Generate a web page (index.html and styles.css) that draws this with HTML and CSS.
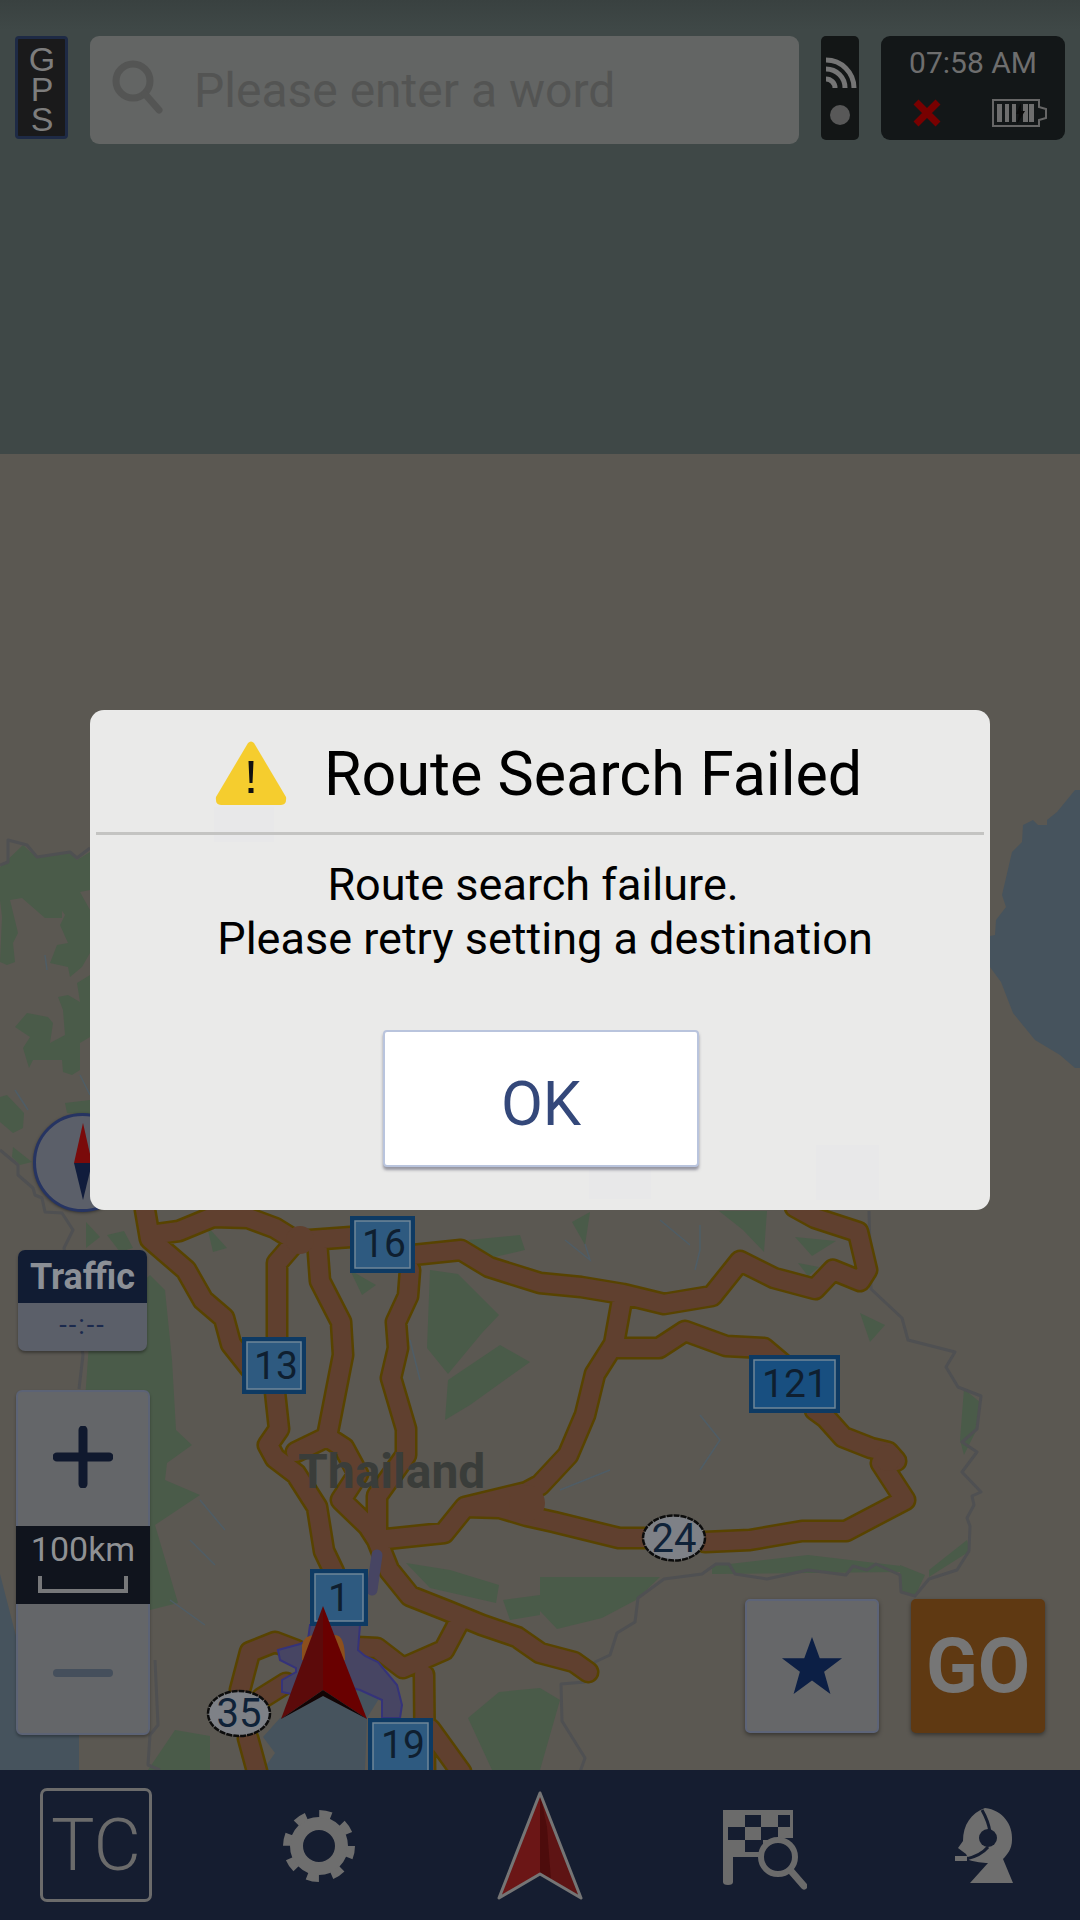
FILE: index.html
```html
<!DOCTYPE html>
<html lang="en">
<head>
<meta charset="utf-8">
<title>Route Search Failed</title>
<link rel="stylesheet" href="styles.css">
</head>
<body>
<div class="screen">
  <header class="topbar">
    <div class="gps"><span class="gps-text">GPS</span></div>
    <div class="search">
      <svg class="search-icon" viewBox="0 0 52 56"><circle cx="21" cy="21" r="17"/><path d="M33 34 47 50"/></svg>
      <span class="placeholder">Please enter a word</span>
    </div>
    <div class="signal">
      <svg class="signal-icon" viewBox="0 0 38 104">
        <g class="arcs"><path d="M5 43a9 9 0 0 1 9 9"/><path d="M5 33a19 19 0 0 1 19 19"/><path d="M5 24a28 28 0 0 1 28 28"/></g>
        <circle class="signal-dot" cx="19" cy="79" r="10"/>
      </svg>
    </div>
    <div class="status">
      <div class="clock">07:58 AM</div>
      <div class="status-row">
        <svg class="cross" viewBox="0 0 28 28"><path d="M3 3 25 25M25 3 3 25"/></svg>
        <svg class="battery" viewBox="0 0 56 28">
          <path class="batt-outline" d="M1 1H47V8L54 10V19L47 21V27H1Z"/>
          <path class="batt-bars" d="M5 5H10V23H5ZM13 5H17V23H13ZM20 5H24V23H20ZM31 5H36V23H31ZM37 5H42V23H37Z"/>
          <path class="batt-bolt" d="M29 4 24 15H27L25 25 33 12H29Z"/>
        </svg>
      </div>
    </div>
  </header>

  <main class="map">
    <svg class="map-canvas" viewBox="0 454 1080 1316">
      <defs>
        <path id="roads" d="M145 1210 150 1239 186 1270 203 1300 224 1318 231 1344 250 1368
          M150 1235 179 1231 213 1217 248 1218 275 1228 296 1241 351 1237
          M413 1255 461 1250 489 1267 540 1283 581 1287 623 1294 664 1304 712 1296 740 1261 774 1278 815 1289 833 1270 860 1281 867 1270 858 1232 815 1218 795 1207
          M296 1241 277 1263 277 1340
          M275 1392 279 1429 268 1445 275 1458 296 1474 317 1507 324 1551 334 1572
          M317 1240 320 1281 341 1322 343 1355 327 1437 296 1452
          M327 1437 344 1448 358 1474 341 1500 368 1526 377 1540
          M410 1270 408 1296 396 1322 398 1348 391 1378 406 1429 406 1455 377 1496 377 1540
          M377 1540 444 1533 465 1507 527 1492 540 1485 568 1455 585 1415 595 1374 614 1344 623 1294
          M617 1348 659 1348 685 1331 726 1346 764 1348 790 1370
          M815 1410 826 1418 843 1437 871 1448 888 1452 896 1461 881 1463 905 1500 846 1531 802 1531 750 1540 705 1542
          M645 1538 619 1538 554 1522 527 1516 500 1508 465 1507
          M377 1540 389 1570 410 1596 448 1611 482 1625 517 1637 540 1653 574 1662 588 1672
          M460 1620 444 1650 403 1668 377 1648 357 1647
          M424 1675 425 1775
          M240 1690 250 1652 275 1642 296 1650
          M262 1698 286 1683
          M248 1738 258 1775
          M430 1729 461 1772"/>
      </defs>

      <g class="sea">
        <path d="M1080 790 1075 790 1057 812 1047 820 1047 825 1038 825 1033 820 1023 825 1022 842 1012 852 1002 895 1006 907 996 920 995 935 985 937 985 965 990 967 1001 982 1013 1013 1035 1040 1060 1055 1075 1068 1080 1068Z"/>
        <path d="M0 1574 41 1733 79 1733 79 1770H0Z"/>
        <path d="M280 1718 322 1693 357 1690 380 1697 367 1718 365 1770 263 1770 275 1753 263 1737Z"/>
      </g>

      <g class="forest">
        <path d="M0 867 23 845 37 858 70 853 77 860 90 852 90 890 80 892 90 910 90 953 82 967 70 977 68 967 50 963 57 945 68 943 60 925 65 915 53 898 62 893 62 918 45 918 22 898 10 900 18 933 13 943 15 962 7 965 0 962 2 917 0 900Z"/>
        <path d="M58 997 68 995 80 1002 77 983 90 975 90 1037 80 1043 80 1070 72 1075 63 1072 62 1060 33 1060 29 1068 23 1048 30 1037 15 1027 27 1013 48 1017 53 1023 50 1043 65 1035 63 1010Z"/>
        <path d="M0 1097 7 1095 24 1113 23 1128 13 1133 0 1122Z"/>
        <path d="M65 1103 90 1100 90 1115 67 1113Z"/>
        <path d="M13 1147 32 1162 20 1165 12 1157Z"/>
        <path d="M86 1222 100 1237 86 1248Z"/>
        <path d="M107 1235 124 1231 133 1248 120 1252Z"/>
        <path d="M150 1275 165 1290 172 1360 176 1430 192 1445 167 1463 165 1480 200 1495 155 1525 178 1603 150 1610 100 1500 85 1400 90 1330Z"/>
        <path d="M207 1226 227 1248 213 1252Z"/>
        <path d="M350 1270 376 1285 362 1295Z"/>
        <path d="M430 1270 458 1274 499 1315 482 1333 448 1374 427 1348Z"/>
        <path d="M448 1380 500 1345 530 1362 470 1405 445 1420Z"/>
        <path d="M468 1240 520 1235 525 1250 490 1258Z"/>
        <path d="M406 1563 450 1570 499 1585 496 1603 430 1588Z"/>
        <path d="M503 1600 540 1595 540 1615 510 1620Z"/>
        <path d="M540 1577 609 1577 660 1577 636 1600 602 1618 557 1629 540 1611Z"/>
        <path d="M468 1718 499 1692 540 1688 560 1700 540 1770H492Z"/>
        <path d="M148 1770 175 1730 210 1736 210 1770Z"/>
        <path d="M719 1211 767 1211 764 1252 743 1230Z"/>
        <path d="M572 1222 590 1212 585 1245Z"/>
        <path d="M795 1237 836 1241 812 1256Z"/>
        <path d="M798 1263 819 1267 808 1276Z"/>
        <path d="M712 1566 808 1555 901 1566 900 1572 712 1574Z"/>
        <path d="M900 1565 925 1575 915 1596 900 1592Z"/>
        <path d="M929 1570 967 1540 970 1551 929 1577Z"/>
        <path d="M964 1389 981 1403 977 1429 964 1455 960 1440Z"/>
        <path d="M860 1313 885 1325 870 1342Z"/>
      </g>

      <g class="rivers">
        <path d="M585 1244 590 1260 565 1240M700 1225 700 1250 695 1270M660 1220 690 1245M700 1415 720 1440 700 1470M610 1470 560 1490M200 1500 225 1530M190 1540 215 1565M170 1600 205 1625M410 1340 420 1380M350 1510 385 1510M45 955 47 970M80 1075 90 1095M15 1090 28 1110"/>
      </g>

      <g class="border">
        <path d="M0 865 8 862 8 840 27 845 37 857 70 852 77 858 90 848"/>
        <path d="M0 1150 18 1165 18 1175 33 1188 35 1195 42 1198 45 1212 62 1213 73 1230 64 1248 83 1355 79 1389"/>
        <path d="M155 1660 158 1725 150 1735 148 1765 160 1770"/>
        <path d="M869 1211 871 1289 902 1318 908 1340 955 1352 946 1367 958 1387 981 1396 977 1429 962 1442 977 1452 962 1472 981 1492 972 1496 974 1505 967 1518 970 1526 969 1551 957 1570 929 1579 915 1596 901 1592 900 1575 876 1564 867 1570 853 1566 846 1575 808 1570 767 1579 735 1574 729 1564 716 1564 702 1574 664 1579 638 1598 635 1622 617 1633 610 1655 595 1662 585 1682 561 1684 562 1721 585 1758 580 1772"/>
      </g>

      <use class="road-edge" href="#roads"/>
      <use class="road-fill" href="#roads"/>
      <circle class="road-knot" cx="527" cy="1503" r="18"/>
      <circle class="road-knot" cx="300" cy="1240" r="14"/>
      <circle class="road-knot" cx="888" cy="1458" r="13"/>

      <g class="route">
        <path class="route-thin" d="M377 1555 372 1590"/>
        <path class="route-body" d="M310 1625H360L358 1650 365 1656 378 1662 397 1685 402 1705 400 1718H382V1700L360 1690 320 1680 296 1695 282 1692 282 1680 296 1672V1668L280 1660 278 1650 300 1644 308 1640Z"/>
      </g>
      <path class="halo" d="M302 1660V1645Q304 1635 315 1635H335Q345 1635 345 1660Z"/>

      <text class="map-label" x="298" y="1488">Thailand</text>

      <g class="sign"><rect x="350" y="1216" width="65" height="57"/><rect class="sign-inner" x="355" y="1221" width="55" height="47"/><text x="384" y="1257">16</text></g>
      <g class="sign"><rect x="242" y="1337" width="64" height="57"/><rect class="sign-inner" x="247" y="1342" width="54" height="47"/><text x="276" y="1379">13</text></g>
      <g class="sign"><rect x="310" y="1569" width="58" height="57"/><rect class="sign-inner" x="315" y="1574" width="48" height="47"/><text x="339" y="1611">1</text></g>
      <g class="sign"><rect x="368" y="1718" width="65" height="70"/><rect class="sign-inner" x="373" y="1723" width="55" height="60"/><text x="403" y="1758">19</text></g>
      <g class="sign sign-wide"><rect x="749" y="1355" width="91" height="58"/><rect class="sign-inner" x="754" y="1360" width="81" height="48"/><text x="795" y="1397">121</text></g>

      <g class="shield"><ellipse cx="239" cy="1713.500" rx="31" ry="22.500"/><text x="239" y="1727">35</text></g>
      <g class="shield"><ellipse cx="674" cy="1538" rx="31" ry="22.500"/><text x="674" y="1552">24</text></g>

      <g class="car">
        <path class="car-left" d="M323 1606 281 1719 323 1690Z"/>
        <path class="car-right" d="M323 1606 367 1719 323 1690Z"/>
        <path class="car-shade" d="M281 1719 323 1690 367 1719 323 1696Z"/>
      </g>
    </svg>

    <div class="compass">
      <svg viewBox="0 0 93 93"><path class="needle-n" d="M47 7 56 47H38Z"/><path class="needle-s" d="M47 84 56 47H38Z"/></svg>
    </div>

    <div class="traffic">
      <div class="traffic-head">Traffic</div>
      <div class="traffic-time">--:--</div>
    </div>

    <div class="zoom">
      <div class="zoom-btn zoom-btn-high"><svg viewBox="0 0 60 62"><path class="zoom-in" d="M4 31H56M30 4V58"/></svg></div>
      <div class="scale">
        <span>100km</span>
        <svg viewBox="0 0 90 18"><path d="M2 0V15H88V0"/></svg>
      </div>
      <div class="zoom-btn zoom-btn-low"><svg viewBox="0 0 60 62"><path class="zoom-out" d="M4 31H56"/></svg></div>
    </div>

    <div class="actions">
      <div class="fav"><svg viewBox="0 0 64 60"><path d="M32 0 40 22H63L44.500 36 51 59 32 45 13 59 19.500 36 1 22H24Z"/></svg></div>
      <div class="go">GO</div>
    </div>
  </main>

  <nav class="tabbar">
    <div class="tab-tc">TC</div>
    <svg class="tab-gear" viewBox="0 0 74 72">
      <circle class="gear-ring" cx="37" cy="36" r="22.500"/>
      <circle class="gear-teeth" cx="37" cy="36" r="32"/>
    </svg>
    <svg class="tab-nav" viewBox="0 0 86 110">
      <path class="nav-left" d="M43 2 2 107 43 83Z"/>
      <path class="nav-right" d="M43 2 84 107 43 83Z"/>
      <path class="nav-mid" d="M43 2 50 36 54 89 43 83Z"/>
      <path class="nav-line" d="M43 2 84 107 43 83 2 107Z"/>
    </svg>
    <svg class="tab-flag" viewBox="0 0 84 80">
      <path class="flag-shape" d="M0 0H70V28H50V47H10V72Q10 75 5 75 0 75 0 72Z"/>
      <path class="flag-check" d="M22 5H38V17H22ZM55 5H67V17H55ZM5 17H22V30H5ZM38 17H55V30H38ZM22 30H40V42H22Z"/>
      <circle class="flag-lens" cx="55" cy="47" r="17"/>
      <path class="flag-handle" d="M68 61 81 76"/>
    </svg>
    <svg class="tab-agent" viewBox="0 0 58 80">
      <path class="agent-head" d="M30 1C48 3 58 18 57 33C57 42 52 48 48 52L58 76H15L33 56C28 56 20 55 14 53L11 47 3 41 8 34C8 18 16 6 30 1Z"/>
      <path class="agent-band" d="M27 3C31 10 34 18 35 25M33 40C28 46 20 50 11 52"/>
      <circle class="agent-ear" cx="33" cy="31" r="9"/>
      <path class="agent-tip" d="M0 49H12V54H0Z"/>
    </svg>
  </nav>

  <section class="dialog" role="alertdialog">
    <span class="ghost ghost-a"></span>
    <span class="ghost ghost-b"></span>
    <span class="ghost ghost-c"></span>
    <div class="dialog-head">
      <svg class="warn" viewBox="0 0 72 64">
        <path class="warn-tri" d="M33 2Q36 -1 39 2L71 56Q72 64 66 64H6Q0 64 1 56Z"/>
        <path class="warn-mark" d="M33.500 20H38.500L37.500 42H34.500ZM33.500 47H38.500V52H33.500Z"/>
      </svg>
      <h1>Route Search Failed</h1>
    </div>
    <p class="dialog-body"><span class="line-a">Route search failure.</span><span>Please retry setting a destination</span></p>
    <button class="ok">OK</button>
  </section>
</div>
</body>
</html>
```

FILE: styles.css
```css
* { box-sizing: border-box; }
html, body { margin: 0; padding: 0; }
body { font-family: Roboto, "Liberation Sans", sans-serif; background: #000; }

.screen {
  position: relative;
  width: 1080px;
  height: 1920px;
  display: flex;
  flex-direction: column;
  overflow: hidden;
}

/* top bar */
.topbar {
  height: 454px;
  flex: none;
  display: flex;
  align-items: flex-start;
  gap: 22px;
  padding: 36px 15px 0;
  background: linear-gradient(#394140 0, #3f4847 30px);
}
.gps {
  width: 53px;
  height: 103px;
  display: flex;
  justify-content: center;
  padding-top: 1px;
  background: #1a1a1b;
  border: 3px solid #1e2a45;
  border-radius: 4px;
  color: #7d7d7d;
}
.gps-text {
  writing-mode: vertical-rl;
  text-orientation: upright;
  font: 34px/47px "Liberation Sans", sans-serif;
  letter-spacing: -8px;
}
.search {
  width: 709px;
  height: 108px;
  display: flex;
  align-items: center;
  padding: 0 0 0 22px;
  background: #636564;
  border-radius: 9px;
}
.search-icon { width: 52px; height: 56px; flex: none; margin-top: -4px; }
.search-icon circle, .search-icon path { fill: none; stroke: #545554; stroke-width: 7; stroke-linecap: round; }
.placeholder { margin-left: 30px; font-size: 48px; color: #535453; }
.signal {
  width: 38px;
  height: 104px;
  background: #131616;
  border-radius: 5px;
}
.signal-icon { display: block; width: 38px; height: 104px; }
.arcs path { fill: none; stroke: #757575; stroke-width: 5; }
.signal-dot { fill: #585858; }
.status {
  width: 184px;
  height: 104px;
  padding-top: 10px;
  background: #131718;
  border-radius: 9px;
}
.clock { text-align: center; font-size: 30px; line-height: 34px; color: #6e6e6e; }
.status-row {
  display: flex;
  align-items: center;
  justify-content: space-between;
  padding: 19px 17px 0 32px;
}
.cross { width: 28px; height: 28px; }
.cross path { fill: none; stroke: #780000; stroke-width: 7; }
.battery { width: 56px; height: 28px; }
.batt-outline { fill: none; stroke: #666; stroke-width: 2; }
.batt-bars { fill: #6e6e6e; }
.batt-bolt { fill: #0b0b0b; }

/* map */
.map {
  position: relative;
  flex: 1;
  background: #5b5852;
}
.map-canvas { display: block; width: 1080px; height: 1316px; }
.sea path { fill: #46535d; }
.forest path { fill: #4a5b49; }
.rivers path { fill: none; stroke: #4f5d66; stroke-width: 1.500; }
.border path { fill: none; stroke: #4f5052; stroke-width: 3; stroke-linejoin: round; }
.road-edge, .road-fill { fill: none; stroke-linejoin: round; stroke-linecap: round; }
.road-edge { stroke: #584300; stroke-width: 23px; }
.road-fill { stroke: #60402f; stroke-width: 18px; }
.road-knot { fill: #60402f; }
.route-body { fill: #474563; stroke: #35337a; stroke-width: 2; }
.route-thin { fill: none; stroke: #474563; stroke-width: 11; stroke-linecap: round; }
.halo { fill: #8c4f1c; }
.map-label { font: 700 48px Roboto, sans-serif; fill: #3a3d3a; }
.sign rect { fill: #0e3a63; }
.sign .sign-inner { fill: #2e5a80; stroke: #6f8698; stroke-width: 1.500; }
.sign text { font: 39px Roboto, sans-serif; fill: #0f1f30; text-anchor: middle; }
.sign-wide .sign-inner { fill: #184f80; }
.shield ellipse { fill: #7e8187; stroke: #0c0c0c; stroke-width: 2.500; stroke-dasharray: 6 1; }
.shield text { font: 40px Roboto, sans-serif; fill: #0f2238; text-anchor: middle; }
.car-left { fill: #5c0a0a; }
.car-right { fill: #690000; }
.car-shade { fill: #120404; }

.compass {
  position: absolute;
  left: 33px;
  top: 659px;
  width: 99px;
  height: 99px;
  border-radius: 50%;
  background: #5b5f69;
  border: 3px solid #263462;
  box-shadow: 0 1px 3px rgba(0, 0, 0, .4);
}
.compass svg { display: block; width: 93px; height: 93px; }
.needle-n { fill: #7a0a0a; }
.needle-s { fill: #101c3c; }

.traffic {
  position: absolute;
  left: 18px;
  top: 796px;
  width: 129px;
  height: 101px;
  border-radius: 7px;
  overflow: hidden;
  background: #5b5f69;
  box-shadow: 0 2px 3px rgba(0, 0, 0, .35);
}
.traffic-head {
  height: 53px;
  text-align: center;
  background: #111c33;
  color: #8b8f96;
  font-weight: 700;
  font-size: 36px;
  line-height: 55px;
}
.traffic-time { text-align: center; font-size: 27px; line-height: 44px; color: #1b2a4d; letter-spacing: 2px; }

.zoom {
  position: absolute;
  left: 16px;
  top: 936px;
  width: 134px;
  height: 345px;
  display: flex;
  flex-direction: column;
  background: #646669;
  border: 2px solid #5c6375;
  border-radius: 6px;
  box-shadow: 0 2px 3px rgba(0, 0, 0, .3);
}
.zoom-btn { display: flex; align-items: center; justify-content: center; }
.zoom-btn-high { height: 134px; flex: none; padding-bottom: 4px; }
.zoom-btn-low { flex: 1; padding-top: 8px; }
.zoom-btn svg { width: 60px; height: 62px; }
.zoom-in { fill: none; stroke: #10192e; stroke-width: 9; stroke-linecap: round; }
.zoom-out { fill: none; stroke: #454f5c; stroke-width: 8; stroke-linecap: round; }
.scale {
  height: 78px;
  flex: none;
  margin: 0 -2px;
  display: flex;
  flex-direction: column;
  align-items: center;
  background: #10141d;
  color: #8f9194;
  font-size: 34px;
  line-height: 46px;
}
.scale svg { width: 90px; height: 18px; margin-top: 4px; }
.scale path { fill: none; stroke: #77787a; stroke-width: 4; }

.actions {
  position: absolute;
  left: 745px;
  top: 1145px;
  display: flex;
  gap: 32px;
}
.fav, .go {
  width: 134px;
  height: 134px;
  display: flex;
  align-items: center;
  justify-content: center;
  border-radius: 5px;
  box-shadow: 0 2px 4px rgba(0, 0, 0, .4);
}
.fav { background: #666769; border: 2px solid #5d6478; }
.fav svg { width: 62px; height: 60px; }
.fav path { fill: #0c1f45; }
.go { background: #5f3912; color: #767676; font-weight: 700; font-size: 76px; }

/* bottom bar */
.tabbar {
  position: relative;
  height: 150px;
  flex: none;
  background: #151d30;
}
.tab-tc {
  position: absolute;
  left: 40px;
  top: 18px;
  width: 112px;
  height: 114px;
  display: flex;
  align-items: center;
  justify-content: center;
  border: 3px solid #6b6b6b;
  border-radius: 7px;
  color: #6b6b6b;
  font-weight: 300;
  font-size: 73px;
}
.tab-gear { position: absolute; left: 282px; top: 40px; width: 74px; height: 72px; }
.gear-ring { fill: none; stroke: #6e6e6e; stroke-width: 13; }
.gear-teeth { fill: none; stroke: #6e6e6e; stroke-width: 8; stroke-dasharray: 12 13.130; }
.tab-nav { position: absolute; left: 497px; top: 21px; width: 86px; height: 110px; }
.nav-left { fill: #6b1616; }
.nav-right { fill: #5e1414; }
.nav-mid { fill: #4d0c0c; }
.nav-line { fill: none; stroke: #757575; stroke-width: 3; stroke-linejoin: round; }
.tab-flag { position: absolute; left: 723px; top: 40px; width: 84px; height: 80px; }
.flag-shape { fill: #6b6b6b; }
.flag-check { fill: #151d30; }
.flag-lens { fill: #151d30; stroke: #6b6b6b; stroke-width: 6; }
.flag-handle { fill: none; stroke: #6b6b6b; stroke-width: 7; stroke-linecap: round; }
.tab-agent { position: absolute; left: 955px; top: 37px; width: 58px; height: 80px; }
.agent-head { fill: #6e6e6e; }
.agent-band { fill: none; stroke: #151d30; stroke-width: 3; }
.agent-ear { fill: #151d30; }
.agent-tip { fill: #6e6e6e; }

/* dialog */
.dialog {
  position: absolute;
  left: 90px;
  top: 710px;
  width: 900px;
  height: 500px;
  display: flex;
  flex-direction: column;
  align-items: center;
  background: #eaeae9;
  border-radius: 14px;
}
.ghost { position: absolute; background: #e8e8e9; }
.ghost-a { left: 124px; top: 97px; width: 60px; height: 35px; }
.ghost-b { left: 726px; top: 435px; width: 63px; height: 55px; }
.ghost-c { left: 499px; top: 459px; width: 62px; height: 30px; }
.dialog-head {
  position: relative;
  align-self: stretch;
  height: 125px;
  margin: 0 6px;
  display: flex;
  align-items: center;
  padding: 6px 0 0 119px;
  border-bottom: 3px solid #c4c4c2;
}
.warn { width: 72px; height: 64px; flex: none; margin-top: -2px; }
.warn-tri { fill: #f5cd2e; }
.warn-mark { fill: #111; }
.dialog-head h1 { margin: 0 0 0 37px; font-weight: 400; font-size: 61px; color: #000; white-space: nowrap; }
.dialog-body {
  position: relative;
  margin: 23px 0 0;
  padding-left: 10px;
  display: flex;
  flex-direction: column;
  align-items: center;
  font-size: 45px;
  line-height: 54px;
  color: #000;
}
.line-a { padding-right: 24px; }
.ok {
  position: absolute;
  left: 293px;
  top: 320px;
  width: 316px;
  height: 137px;
  padding: 10px 0 0;
  background: #fff;
  border: 2px solid #b9c4dd;
  border-radius: 4px;
  box-shadow: 0 3px 3px rgba(80, 80, 100, .55);
  color: #34487a;
  font: 400 61px Roboto, sans-serif;
}
```
